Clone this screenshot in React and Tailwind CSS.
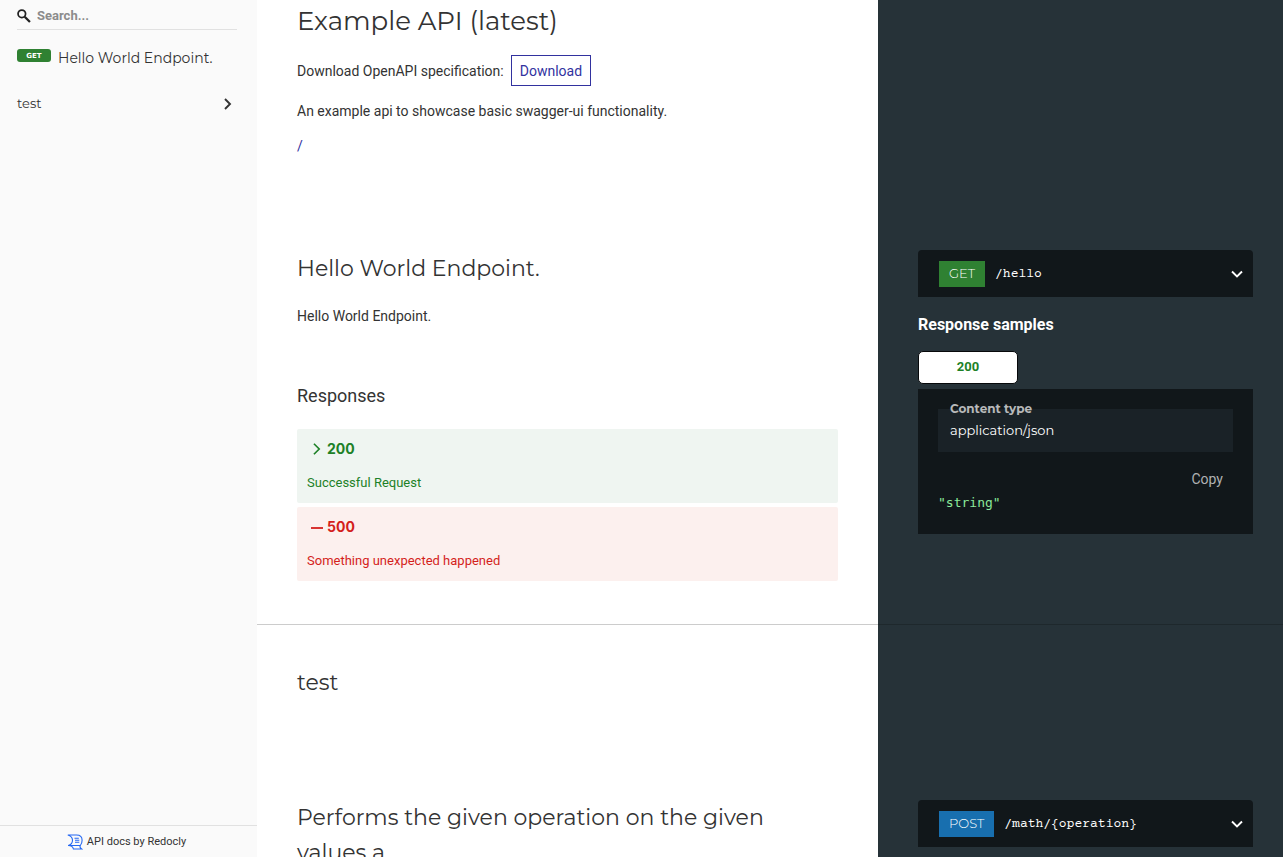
import React from "react";

const heading = "font-[Montserrat,sans-serif] font-normal text-[#333333]";

function Chevron({ className, d = "M5 3l5 5-5 5" }) {
  return (
    <svg viewBox="0 0 16 16" className={className} fill="none" stroke="currentColor" strokeWidth="1.900" aria-hidden="true">
      <path d={d} />
    </svg>
  );
}

function RedoclyLogo() {
  return (
    <svg viewBox="0 0 16 16" className="size-4 shrink-0" fill="none" stroke="#2467f2" strokeWidth="1.1" aria-hidden="true">
      <path d="M.8 1h8.700c3.400 0 5.600 1.800 5.600 5.200 0 2.600-.7 4.100-1.800 5.300H1.200c2.900-.8 4.300-2.700 4.300-5.200C5.500 3.500 3.600 1.800.8 1z" />
      <path d="M1.200 11.500c3.200.1 4.800 1.400 5.200 3.500h8.300c-1.500-.9-2.100-2.100-1.400-3.500" />
      <path d="M7.500 4.200h4.300M8 6.200h4.300M8 8.200h4.300" />
    </svg>
  );
}

function Sidebar() {
  return (
    <aside className="flex w-[257px] shrink-0 flex-col bg-[#fafafa] text-[#333333]">
      <label className="mr-5 ml-[17px] flex h-[30px] items-center gap-1.5 border-b border-[#e1e1e1] pt-0.5">
        <svg viewBox="0 0 16 16" className="size-3.5" fill="none" stroke="#222222" aria-hidden="true">
          <circle cx="5.500" cy="5.500" r="4.300" strokeWidth="2" />
          <path d="M8.800 8.800l6 6" strokeWidth="2.600" />
        </svg>
        <input
          type="text"
          aria-label="Search"
          placeholder="Search..."
          className="min-w-0 flex-1 bg-transparent pt-0.5 text-[13px] font-bold outline-none placeholder:text-[#8c8c8c]"
        />
      </label>
      <nav className="flex flex-1 flex-col pt-3">
        <a href="#hello" className="flex h-[46px] items-start gap-[7px] px-[17px] pt-[7px]">
          <span className="flex h-[13px] w-[34px] shrink-0 items-center justify-center rounded-[3px] bg-[#2f8132] font-['DejaVu_Sans'] text-[7px] font-bold text-white">
            GET
          </span>
          <span className="font-[Montserrat,sans-serif] text-sm leading-[18px] whitespace-nowrap">Hello World Endpoint.</span>
        </a>
        <a href="#test" className="flex h-[31px] items-center justify-between pr-[21px] pl-[17px]">
          <span className="font-[Montserrat,sans-serif] text-[13px]">test</span>
          <Chevron className="size-4" />
        </a>
      </nav>
      <a href="https://redocly.com/redoc/" className="flex h-8 items-center justify-center gap-1 border-t border-[#e1e1e1] pr-1 text-[11px]">
        <RedoclyLogo />
        API docs by Redocly
      </a>
    </aside>
  );
}

function Row({ id, children, side, className }) {
  return (
    <section id={id} className={`grid grid-cols-[621fr_405fr] ${className}`}>
      <div className="min-w-0 px-10">{children}</div>
      <div className="min-w-0 pr-[30px] pl-10">{side}</div>
    </section>
  );
}

function Endpoint({ method, path, color }) {
  return (
    <button type="button" className="flex h-[47px] w-full items-center rounded-t bg-[#11171a] pr-2 pl-[21px] text-white">
      <span className={`flex h-[26px] items-center px-2.5 font-[Montserrat,sans-serif] text-[13px] font-light ${color}`}>{method}</span>
      <span className="ml-2.5 flex-1 pt-px text-left font-['Courier_Prime','Nimbus_Mono_PS','FreeMono','Liberation_Mono',monospace] text-[13px]">{path}</span>
      <Chevron className="size-4" d="M3 5.500l5 5 5-5" />
    </button>
  );
}

function Samples() {
  return (
    <>
      <h3 className="mt-[18px] text-base leading-5 font-bold text-white">Response samples</h3>
      <button type="button" className="mt-4 flex h-[33px] w-[100px] items-center justify-center rounded-[5px] border border-[#07090b] bg-white text-[13px] font-bold text-[#1d8127]">
        200
      </button>
      <div className="mt-[5px] h-[145px] bg-[#11171a] px-5 pt-5">
        <div className="flex h-[43px] flex-col bg-[#1a2227] px-3 font-[Montserrat,sans-serif]">
          <span className="-mt-2 text-xs leading-4 font-bold text-[#b8b9ba]">Content type</span>
          <span className="mt-[3px] text-[13px] leading-5 text-white">application/json</span>
        </div>
        <div className="mt-[15px] flex justify-end pr-2.5">
          <button type="button" className="text-sm leading-6 text-[#b0b2b3]">Copy</button>
        </div>
        <code className="mt-0.5 block font-['DejaVu_Sans_Mono',monospace] text-[13px] leading-5 text-[#8ce99a]">"string"</code>
      </div>
    </>
  );
}

export default function App() {
  return (
    <div className="flex h-screen overflow-hidden bg-white font-[Roboto,sans-serif] text-sm text-[#333333]">
      <Sidebar />
      <main className="min-w-0 flex-1 overflow-hidden bg-[linear-gradient(to_right,#ffffff_60.55%,#263238_60.55%)]">
        <Row id="info" className="h-[250px]">
          <h1 className={`${heading} pt-[5px] text-[26px] leading-8`}>Example API (latest)</h1>
          <p className="mt-[18px] flex items-center gap-[7px]">
            Download OpenAPI specification:
            <a href="#download" className="flex h-[31px] items-center border border-[#32329f] px-2 text-[#32329f]">Download</a>
          </p>
          <p className="mt-[15px] leading-5">An example api to showcase basic swagger-ui functionality.</p>
          <p className="mt-[15px] leading-5"><a href="/" className="text-[#32329f]">/</a></p>
        </Row>
        <Row
          id="hello"
          className="h-[375px] border-b border-black/20"
          side={<><Endpoint method="GET" path="/hello" color="bg-[#2f8132]" /><Samples /></>}
        >
          <h2 className={`${heading} pt-[5px] text-[22px] leading-7`}>Hello World Endpoint.</h2>
          <p className="mt-[23px] leading-5">Hello World Endpoint.</p>
          <h3 className="mt-[58px] text-lg leading-6">Responses</h3>
          <button type="button" className="mt-[21px] flex h-[74px] w-full flex-col items-start rounded-xs bg-[#eff5f1] px-2.5 pt-2.5 text-left text-[13px] text-[#1d8127]">
            <span className="flex h-5 items-center gap-[3px] pl-[3px] font-[Inter] text-sm font-bold">
              <Chevron className="size-3.5" d="M4.500 2l6 6-6 6" />
              200
            </span>
            <span className="mt-3.5 leading-5">Successful Request</span>
          </button>
          <div className="mt-1 h-[74px] rounded-xs bg-[#fcf0ee] px-2.5 pt-2.5 text-[13px] text-[#d41f1c]">
            <strong className="flex h-5 items-center gap-1 pl-1 font-[Inter] text-sm font-bold">
              <svg viewBox="0 0 12 12" className="size-3" aria-hidden="true"><path d="M0 7h12" stroke="currentColor" strokeWidth="1.800" /></svg>
              500
            </strong>
            <p className="mt-3.5 leading-5">Something unexpected happened</p>
          </div>
        </Row>
        <Row id="test" className="h-[175px]">
          <h2 className={`${heading} pt-11 text-[22px] leading-7`}>test</h2>
        </Row>
        <Row
          id="math"
          className="h-[375px]"
          side={<Endpoint method="POST" path="/math/{operation}" color="bg-[#186faf]" />}
        >
          <h2 className={`${heading} text-[22px] leading-[35px]`}>Performs the given operation on the given values a</h2>
        </Row>
      </main>
    </div>
  );
}
